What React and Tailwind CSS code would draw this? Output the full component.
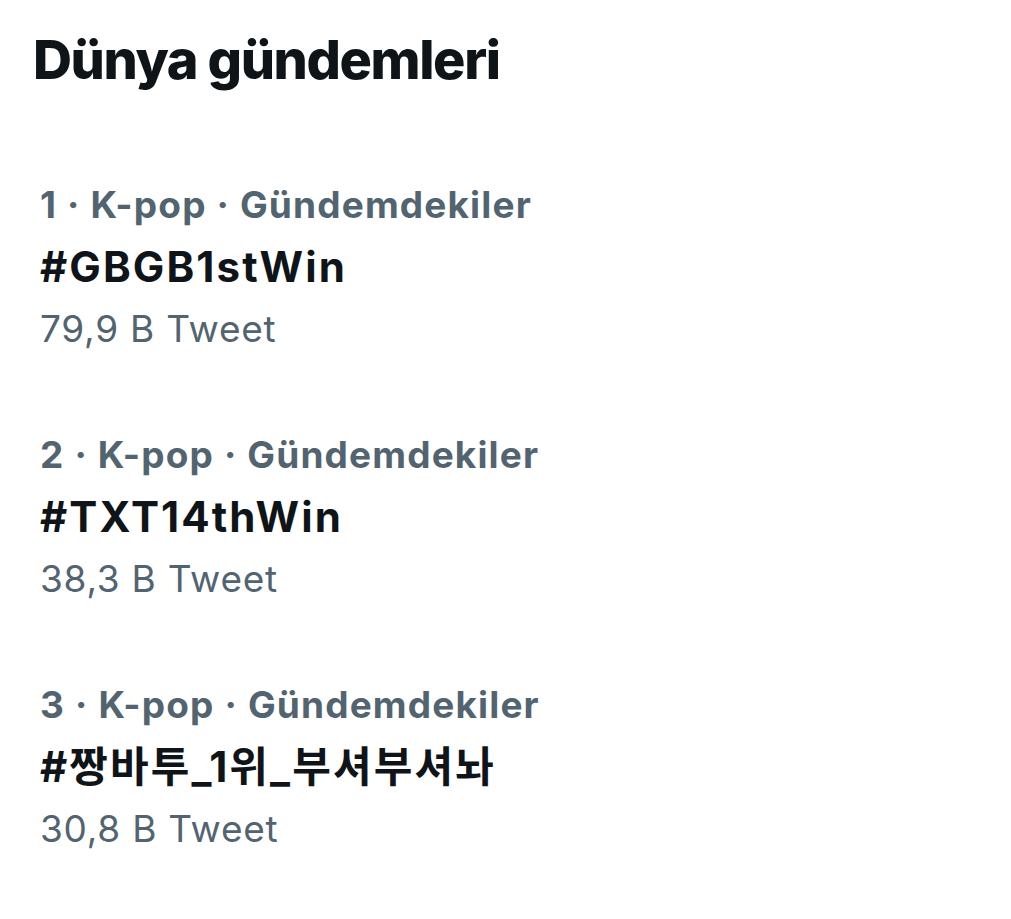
import React from 'react';

const trends = [
    { rank: 1, topic: 'K-pop', tag: '#GBGB1stWin', count: '79,9 B Tweet' },
    { rank: 2, topic: 'K-pop', tag: '#TXT14thWin', count: '38,3 B Tweet' },
    { rank: 3, topic: 'K-pop', tag: '#짱바투_1위_부셔부셔놔', count: '30,8 B Tweet' },
];

const App = () => {
    return (
        <div className="min-h-screen w-[1011px] bg-white font-['Inter','Noto_Sans_CJK_KR',sans-serif] px-[33px] pt-[28px]">
            <h1 className="text-[54px] leading-[64px] font-extrabold tracking-[-1.4px] text-[#0f1419] mb-[50px]">Dünya gündemleri</h1>

            <div className="flex flex-col">
                {trends.map((t) => (
                    <div key={t.rank} className="py-[32px] px-[7px] flex flex-col">
                        <div className="text-[37px] leading-[62px] font-bold tracking-[1.15px] text-[#536471]">
                            {t.rank} · {t.topic} · Gündemdekiler
                        </div>
                        <div className="text-[42px] leading-[62px] font-bold tracking-[2.1px] text-[#0f1419]">{t.tag}</div>
                        <div className="text-[37px] leading-[62px] tracking-[0.75px] text-[#536471]">{t.count}</div>
                    </div>
                ))}
            </div>
        </div>
    );
};

export default App;
